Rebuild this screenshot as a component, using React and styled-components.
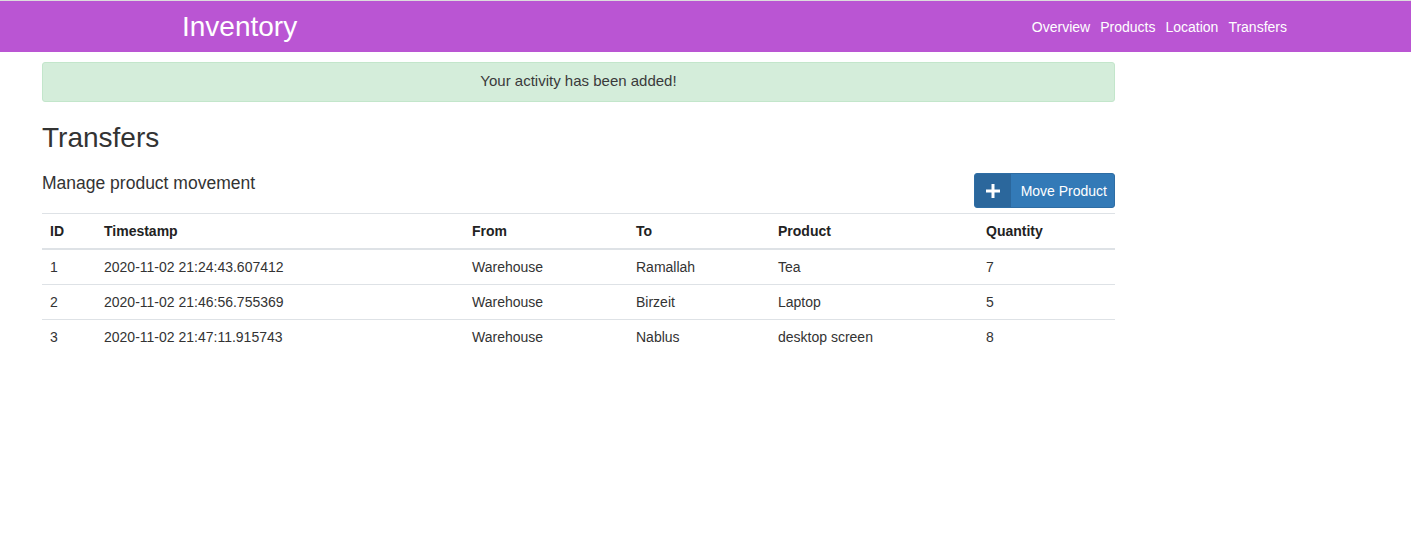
import React from 'react';
import styled, { createGlobalStyle } from 'styled-components';

const GlobalStyle = createGlobalStyle`
  *, *::before, *::after {
    box-sizing: border-box;
  }
  html, body {
    margin: 0;
    padding: 0;
    background: #fff;
  }
  body {
    font-family: "Liberation Sans", Arial, sans-serif;
    font-size: 14px;
    color: #333;
  }
`;

const Navbar = styled.nav`
  display: flex;
  align-items: center;
  justify-content: space-between;
  height: 52px;
  border-top: 1px solid #dcdcdc;
  background: #ba55d3;
  padding: 1px 124px 0 182px;
`;

const Brand = styled.a`
  font-size: 28px;
  color: #fff;
  text-decoration: none;
  line-height: 1;
`;

const NavLinks = styled.ul`
  display: flex;
  gap: 10px;
  list-style: none;
  margin: 0;
  padding: 0;
`;

const NavLink = styled.a`
  color: #fff;
  text-decoration: none;
  font-size: 14px;
`;

const Main = styled.main`
  width: 1073px;
  margin-left: 42px;
  padding-top: 10px;
`;

const Alert = styled.div`
  height: 40px;
  display: flex;
  align-items: center;
  justify-content: center;
  padding-bottom: 3px;
  background: #d4edda;
  border: 1px solid #c3e6cb;
  border-radius: 3px;
  color: #3a3a3a;
  font-size: 15px;
`;

const Title = styled.h2`
  margin: 20px 0 0;
  font-size: 28px;
  font-weight: 400;
  line-height: 31px;
  color: #333;
`;

const SubRow = styled.div`
  display: flex;
  justify-content: space-between;
  align-items: flex-start;
  margin-top: 20px;
`;

const Subtitle = styled.p`
  margin: 0;
  font-size: 17.5px;
  line-height: 20px;
  color: #333;
`;

const Button = styled.button`
  display: flex;
  align-items: stretch;
  height: 35px;
  padding: 0;
  border: 1px solid #2e6da4;
  border-radius: 3px;
  background: #337ab7;
  color: #fff;
  font-family: inherit;
  font-size: 14px;
  cursor: pointer;
  overflow: hidden;
`;

const ButtonIcon = styled.span`
  display: flex;
  align-items: center;
  justify-content: center;
  width: 36px;
  background: #2b679c;
`;

const ButtonLabel = styled.span`
  display: flex;
  align-items: center;
  padding: 0 7px 0 10px;
`;

const Table = styled.table`
  width: 100%;
  margin-top: 5px;
  border-collapse: collapse;
  table-layout: fixed;
`;

const Th = styled.th`
  text-align: left;
  font-weight: 700;
  padding: 8px;
  line-height: 18px;
  border-top: 1px solid #dee2e6;
  border-bottom: 2px solid #dee2e6;
  width: ${p => p.$w}px;
  color: #222;
`;

const Td = styled.td`
  padding: 8px;
  line-height: 18px;
  color: #333;
`;

const Tr = styled.tr`
  & + & td {
    border-top: 1px solid #dee2e6;
  }
`;

const columns = [
  { key: 'id', label: 'ID', w: 54 },
  { key: 'ts', label: 'Timestamp', w: 368 },
  { key: 'from', label: 'From', w: 164 },
  { key: 'to', label: 'To', w: 142 },
  { key: 'product', label: 'Product', w: 208 },
  { key: 'qty', label: 'Quantity', w: 137 },
];

const transfers = [
  { id: 1, ts: '2020-11-02 21:24:43.607412', from: 'Warehouse', to: 'Ramallah', product: 'Tea', qty: 7 },
  { id: 2, ts: '2020-11-02 21:46:56.755369', from: 'Warehouse', to: 'Birzeit', product: 'Laptop', qty: 5 },
  { id: 3, ts: '2020-11-02 21:47:11.915743', from: 'Warehouse', to: 'Nablus', product: 'desktop screen', qty: 8 },
];

const PlusIcon = () => (
  <svg width="14" height="14" viewBox="0 0 14 14">
    <path d="M5.5 0h3v5.5H14v3H8.5V14h-3V8.5H0v-3h5.5z" fill="#fff" />
  </svg>
);

const App = () => (
  <>
    <GlobalStyle />
    <Navbar>
      <Brand href="#">Inventory</Brand>
      <NavLinks>
        {['Overview', 'Products', 'Location', 'Transfers'].map(item => (
          <li key={item}>
            <NavLink href="#">{item}</NavLink>
          </li>
        ))}
      </NavLinks>
    </Navbar>
    <Main>
      <Alert>Your activity has been added!</Alert>
      <Title>Transfers</Title>
      <SubRow>
        <Subtitle>Manage product movement</Subtitle>
        <Button>
          <ButtonIcon>
            <PlusIcon />
          </ButtonIcon>
          <ButtonLabel>Move Product</ButtonLabel>
        </Button>
      </SubRow>
      <Table>
        <thead>
          <tr>
            {columns.map(c => (
              <Th key={c.key} $w={c.w}>{c.label}</Th>
            ))}
          </tr>
        </thead>
        <tbody>
          {transfers.map(row => (
            <Tr key={row.id}>
              {columns.map(c => (
                <Td key={c.key}>{row[c.key]}</Td>
              ))}
            </Tr>
          ))}
        </tbody>
      </Table>
    </Main>
  </>
);

export default App;
